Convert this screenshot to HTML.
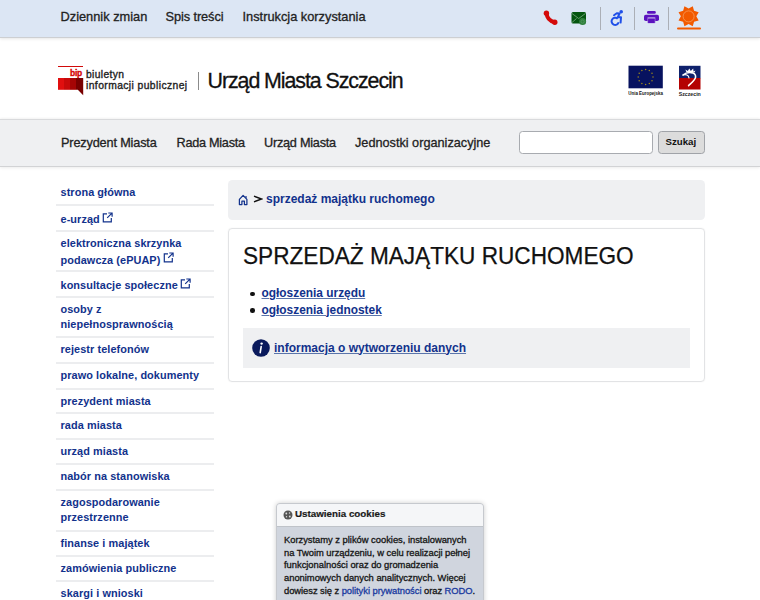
<!DOCTYPE html>
<html lang="pl"><head><meta charset="utf-8">
<style>
*{box-sizing:border-box;margin:0;padding:0}
html,body{width:760px;height:600px;overflow:hidden;background:#fff}
body{font-family:"Liberation Sans",sans-serif;position:relative;color:#222}
.a{position:absolute;white-space:nowrap;line-height:1}
#top{position:absolute;left:0;top:0;width:760px;height:38px;background:#dce6f4;border-bottom:1px solid #cdcfd2;box-shadow:0 1px 3px rgba(0,0,0,.10)}
.tl{font-size:12.8px;color:#222;top:11px;margin-left:.5px;-webkit-text-stroke:.3px #222}
.sep{position:absolute;width:1px;background:#abafb6;top:7px;height:22.5px}
#nav{position:absolute;left:0;top:119px;width:760px;height:48px;background:#eff0f2;border-top:1px solid #d9dadc;border-bottom:1px solid #d2d3d5;box-shadow:0 1px 3px rgba(0,0,0,.08),0 -1px 2px rgba(0,0,0,.04)}
.nl{font-size:12.7px;color:#222;top:136.5px;-webkit-text-stroke:.3px #222}
.side{position:absolute;left:56px;width:158px;height:2px;background:#ecedef}
.sl{font-size:10.9px;color:#12328c;font-weight:bold;letter-spacing:.08px}
#crumb{position:absolute;left:228px;top:180px;width:476.5px;height:40px;background:#eff0f2;border-radius:4.5px}
#box{position:absolute;left:227.8px;top:228px;width:477.2px;height:154px;border:1.6px solid #e2e3e5;border-radius:4px;box-shadow:0 0 1.5px rgba(0,0,0,.08)}
#info{position:absolute;left:243px;top:328px;width:446.6px;height:40px;background:#eff0f2}
.lnk{color:#12328c;font-weight:bold;text-decoration:underline;text-decoration-color:#5a74ab;text-decoration-thickness:1px;text-underline-offset:.5px}
#cookie{position:absolute;left:276px;top:502.5px;width:207.5px;height:110px;border-radius:4px;background:#d0d5de;box-shadow:0 0 5px rgba(0,0,0,.2);overflow:hidden;border:1px solid #c6c9ce}
#ch{position:absolute;left:0;top:0;width:100%;height:23px;background:#f5f6f8;border-bottom:1px solid #bfc3c9}
.ct{font-size:9.4px;color:#151515;-webkit-text-stroke:.3px #151515}
</style></head><body>
<div id="top"></div>
<div class="a tl" style="left:60px">Dziennik zmian</div>
<div class="a tl" style="left:165px;letter-spacing:-.1px">Spis treści</div>
<div class="a tl" style="left:242px">Instrukcja korzystania</div>
<svg class="a" style="left:542px;top:10px" width="17" height="16" viewBox="0 0 17 16">
<path d="M4.6 3.4Q5 10 12.6 12.4" stroke="#d40a0a" stroke-width="4" fill="none" stroke-linecap="round"/>
<circle cx="4.4" cy="3.3" r="2.7" fill="#d40a0a"/><circle cx="12.8" cy="12.3" r="2.7" fill="#d40a0a"/></svg>
<svg class="a" style="left:571px;top:11px" width="17" height="15" viewBox="0 0 17 15">
<rect x="0.5" y="1" width="14.5" height="11.5" rx="1.5" fill="#05560f"/>
<path d="M1 2.5l6.7 5 6.7-5M1 11.5l4.5-4M14.5 11.5l-4.5-4" stroke="#8fb895" stroke-width=".7" fill="none"/>
<circle cx="11.6" cy="10.6" r="3.5" fill="#2f7f3c"/><circle cx="11.6" cy="10.6" r="1.6" fill="none" stroke="#5aa066" stroke-width=".6"/></svg>
<div class="sep" style="left:600px"></div>
<svg class="a" style="left:609px;top:9px" width="16" height="17" viewBox="0 0 16 17">
<circle cx="12.2" cy="2.8" r="1.8" fill="#1f4fe8"/>
<path d="M5 6.2L7.8 4.2 10.6 4.6 8.8 8.2 12 8.3 11.6 13.6" stroke="#1f4fe8" stroke-width="2" fill="none" stroke-linejoin="round" stroke-linecap="round"/>
<path d="M8.75 9.75A3.6 3.6 0 1 0 9.68 13.23" stroke="#1f4fe8" stroke-width="2" fill="none"/></svg>
<div class="sep" style="left:634px"></div>
<svg class="a" style="left:643px;top:10px" width="17" height="14" viewBox="0 0 17 14">
<rect x="4" y="0.9" width="8.8" height="2.9" rx="1.3" fill="#5b12bf"/>
<rect x="1" y="4.7" width="15" height="6.4" rx="1.8" fill="#5b12bf"/>
<rect x="4.4" y="7" width="8" height="6.2" rx=".8" fill="#a27fdc"/>
<rect x="5.1" y="8.7" width="6.6" height="4.4" rx=".5" fill="#5b12bf"/></svg>
<div class="sep" style="left:668px"></div>
<svg class="a" style="left:676px;top:4px" width="26" height="27" viewBox="0 0 26 27">
<polygon fill="#f25a00" points="16.77,2.23 18.04,6.86 22.67,8.13 20.30,12.30 22.67,16.47 18.04,17.74 16.77,22.37 12.60,20.00 8.43,22.37 7.16,17.74 2.53,16.47 4.90,12.30 2.53,8.13 7.16,6.86 8.43,2.23 12.60,4.60"/>
<circle cx="12.6" cy="12.4" r="5.5" fill="#f25a00" stroke="#f7b27a" stroke-width=".6"/>
<rect x="1" y="23.6" width="24" height="2" rx="1" fill="#f25a00"/></svg>
<div class="a" style="left:58px;top:65.5px;width:25px;height:1.8px;background:#d10a0a"></div>
<div class="a" style="left:70px;top:68.5px;font-size:8.5px;font-weight:bold;color:#d40000;letter-spacing:-.3px;-webkit-text-stroke:.3px #d40000">bip</div>
<svg class="a" style="left:58px;top:78px" width="26" height="18" viewBox="0 0 26 18">
<path d="M0 0h6v11.8H0z" fill="#e10f0f"/><path d="M6 0h6v11.8H6z" fill="#c80a0a"/><path d="M12 0h6v11.8h-6z" fill="#a50505"/><path d="M18 0h7.2v17.2l-5.4-5.4H18z" fill="#780000"/></svg>
<div class="a" style="left:86px;top:69.5px;font-size:10.3px;color:#222;letter-spacing:.35px;-webkit-text-stroke:.35px #222">biuletyn</div>
<div class="a" style="left:86px;top:81px;font-size:10.3px;color:#222;letter-spacing:.42px;-webkit-text-stroke:.35px #222">informacji publicznej</div>
<div class="a" style="left:198px;top:72px;width:1.4px;height:18px;background:#8b8b8b"></div>
<div class="a" style="left:207.5px;top:70.7px;font-size:21.4px;color:#111;letter-spacing:-1.07px;-webkit-text-stroke:.3px #111">Urząd Miasta Szczecin</div>
<svg class="a" style="left:628px;top:65px" width="36" height="31" viewBox="0 0 36 31">
<rect x="0.5" y="0.7" width="34.3" height="22.6" fill="#07125f"/>
<g fill="#a08a1a"><circle cx="25.00" cy="12.00" r=".75"/><circle cx="24.01" cy="15.70" r=".75"/><circle cx="21.30" cy="18.41" r=".75"/><circle cx="17.60" cy="19.40" r=".75"/><circle cx="13.90" cy="18.41" r=".75"/><circle cx="11.19" cy="15.70" r=".75"/><circle cx="10.20" cy="12.00" r=".75"/><circle cx="11.19" cy="8.30" r=".75"/><circle cx="13.90" cy="5.59" r=".75"/><circle cx="17.60" cy="4.60" r=".75"/><circle cx="21.30" cy="5.59" r=".75"/><circle cx="24.01" cy="8.30" r=".75"/></g>
<text x="17.6" y="29.6" font-family="Liberation Sans" font-size="5.6" font-weight="bold" text-anchor="middle" fill="#111" textLength="34.5" lengthAdjust="spacingAndGlyphs">Unia Europejska</text></svg>
<svg class="a" style="left:678px;top:65px" width="24" height="32" viewBox="0 0 24 32">
<rect x="1" y="0.8" width="21.5" height="12.5" fill="#0f216c"/>
<rect x="1" y="13" width="21.5" height="11.5" fill="#b40202"/>
<path d="M8.4 7.2L7.4 4.6 9.8 6 11.3 3.6 12.8 6 15.2 3.6 15.5 6.4 17.4 5.4 16.6 7.4z" fill="#fff"/>
<path d="M5 10C7 8.2 10 7.4 13 7.6 16 7.8 17.8 9.2 17.6 12 17.4 15 14 17.5 10.6 20.6" stroke="#fff" stroke-width="1.6" fill="none" stroke-linecap="round"/>
<path d="M5.2 10C7 9.4 9 9.6 10.4 11.2L11 13" stroke="#fff" stroke-width="1.1" fill="none" stroke-linecap="round"/>
<text x="11.8" y="30.6" font-family="Liberation Sans" font-size="5.8" font-weight="bold" text-anchor="middle" fill="#222" textLength="22" lengthAdjust="spacingAndGlyphs">Szczecin</text></svg>
<div id="nav"></div>
<div class="a nl" style="left:61px;letter-spacing:-0.15px">Prezydent Miasta</div>
<div class="a nl" style="left:176.5px;letter-spacing:-0.27px">Rada Miasta</div>
<div class="a nl" style="left:264px;letter-spacing:-0.24px">Urząd Miasta</div>
<div class="a nl" style="left:355px;letter-spacing:0px">Jednostki organizacyjne</div>
<div class="a" style="left:519px;top:131px;width:134px;height:23px;background:#fff;border:1px solid #a8abb0;border-radius:3.5px"></div>
<div class="a" style="left:658px;top:131px;width:46.5px;height:23px;background:#dcdcdc;border:1px solid #a0a3a8;border-radius:3.5px"></div>
<div class="a" style="left:665.5px;top:137px;font-size:9.7px;font-weight:bold;color:#111">Szukaj</div>
<div class="a sl" style="left:60.5px;top:186.8px">strona główna</div>
<div class="side" style="top:204px"></div>
<div class="a sl" style="left:60.5px;top:212.1px">e-urząd<svg style="display:inline-block;vertical-align:baseline;margin-left:2.5px;position:relative;top:-.5px" width="11" height="11" viewBox="0 0 11 11"><path d="M5 1.8H1.3v8h8V6M6.3 1h3.8v3.8M10 1.1L5.2 5.9" stroke="#12328c" stroke-width="1.2" fill="none"/></svg></div>
<div class="side" style="top:230px"></div>
<div class="a sl" style="left:60.5px;top:237.6px">elektroniczna skrzynka</div>
<div class="a sl" style="left:60.5px;top:252.8px">podawcza (ePUAP)<svg style="display:inline-block;vertical-align:baseline;margin-left:2.5px;position:relative;top:-.5px" width="11" height="11" viewBox="0 0 11 11"><path d="M5 1.8H1.3v8h8V6M6.3 1h3.8v3.8M10 1.1L5.2 5.9" stroke="#12328c" stroke-width="1.2" fill="none"/></svg></div>
<div class="side" style="top:270px"></div>
<div class="a sl" style="left:60.5px;top:278.4px">konsultacje społeczne<svg style="display:inline-block;vertical-align:baseline;margin-left:2.5px;position:relative;top:-.5px" width="11" height="11" viewBox="0 0 11 11"><path d="M5 1.8H1.3v8h8V6M6.3 1h3.8v3.8M10 1.1L5.2 5.9" stroke="#12328c" stroke-width="1.2" fill="none"/></svg></div>
<div class="side" style="top:296px"></div>
<div class="a sl" style="left:60.5px;top:304.2px">osoby z</div>
<div class="a sl" style="left:60.5px;top:319.4px">niepełnosprawnością</div>
<div class="side" style="top:336px"></div>
<div class="a sl" style="left:60.5px;top:344.4px">rejestr telefonów</div>
<div class="side" style="top:362px"></div>
<div class="a sl" style="left:60.5px;top:370.1px">prawo lokalne, dokumenty</div>
<div class="side" style="top:388px"></div>
<div class="a sl" style="left:60.5px;top:395.5px">prezydent miasta</div>
<div class="side" style="top:412px"></div>
<div class="a sl" style="left:60.5px;top:420.4px">rada miasta</div>
<div class="side" style="top:438px"></div>
<div class="a sl" style="left:60.5px;top:446.1px">urząd miasta</div>
<div class="side" style="top:463px"></div>
<div class="a sl" style="left:60.5px;top:471.2px">nabór na stanowiska</div>
<div class="side" style="top:489px"></div>
<div class="a sl" style="left:60.5px;top:496.5px">zagospodarowanie</div>
<div class="a sl" style="left:60.5px;top:511.7px">przestrzenne</div>
<div class="side" style="top:530px"></div>
<div class="a sl" style="left:60.5px;top:537.6px">finanse i majątek</div>
<div class="side" style="top:555px"></div>
<div class="a sl" style="left:60.5px;top:562.6px">zamówienia publiczne</div>
<div class="side" style="top:580px"></div>
<div class="a sl" style="left:60.5px;top:588.1px">skargi i wnioski</div>
<div id="crumb"></div>
<svg class="a" style="left:237.7px;top:193.5px" width="11" height="12" viewBox="0 0 11 12">
<path d="M1.4 10.6V5.4L5.1 1.4 8.9 5.4V10.6H6.4V7.2H3.9V10.6z" stroke="#12328c" stroke-width="1.25" fill="none" stroke-linejoin="round"/>
<path d="M7.4 3.4V1.9H8.6V4.6z" fill="#12328c"/></svg>
<svg class="a" style="left:253px;top:195px" width="10" height="8" viewBox="0 0 10 8"><path d="M1 1.1L8.6 4 1 6.9" stroke="#111" stroke-width="1.5" fill="none"/></svg>
<div class="a" style="left:266px;top:192.5px;font-size:12px;color:#12328c;font-weight:bold">sprzedaż majątku ruchomego</div>
<div id="box"></div>
<div class="a" style="left:243px;top:244px;font-size:24.4px;color:#111;-webkit-text-stroke:.25px #111;transform:scaleX(.927);transform-origin:0 0">SPRZEDAŻ MAJĄTKU RUCHOMEGO</div>
<div class="a" style="left:250px;top:291.5px;width:4.5px;height:4.5px;border-radius:50%;background:#111"></div>
<div class="a" style="left:250px;top:308px;width:4.5px;height:4.5px;border-radius:50%;background:#111"></div>
<div class="a lnk" style="left:261.5px;top:288px;font-size:11.9px">ogłoszenia urzędu</div>
<div class="a lnk" style="left:261.5px;top:304.5px;font-size:11.9px">ogłoszenia jednostek</div>
<div id="info"></div>
<svg class="a" style="left:251.5px;top:338.5px" width="18" height="18" viewBox="0 0 18 18">
<circle cx="9" cy="9" r="8.8" fill="#0a1a5c"/><circle cx="9.6" cy="4.6" r="1.2" fill="#fff"/>
<path d="M9.2 7.5L8.2 13.6" stroke="#fff" stroke-width="1.6" stroke-linecap="round"/></svg>
<div class="a lnk" style="left:274px;top:341.5px;font-size:12px">informacja o wytworzeniu danych</div>
<div id="cookie"><div id="ch"></div></div>
<svg class="a" style="left:283px;top:510px" width="10" height="10" viewBox="0 0 10 10">
<circle cx="5" cy="5" r="4.5" fill="#555"/><circle cx="3.3" cy="3.5" r=".9" fill="#ddd"/><circle cx="6.5" cy="3" r=".7" fill="#ddd"/><circle cx="6.8" cy="6.5" r=".9" fill="#ddd"/><circle cx="3.5" cy="6.8" r=".7" fill="#ddd"/></svg>
<div class="a" style="left:295px;top:508.6px;font-size:9.8px;font-weight:bold;color:#1a1a1a;-webkit-text-stroke:.2px #1a1a1a">Ustawienia cookies</div>
<div class="a ct" style="left:284px;top:535px;letter-spacing:-.02px">Korzystamy z plików cookies, instalowanych</div>
<div class="a ct" style="left:284px;top:547.8px;letter-spacing:-.02px">na Twoim urządzeniu, w celu realizacji pełnej</div>
<div class="a ct" style="left:284px;top:560.3px;letter-spacing:-.02px">funkcjonalności oraz do gromadzenia</div>
<div class="a ct" style="left:284px;top:573px;letter-spacing:-.02px">anonimowych danych analitycznych. Więcej</div>
<div class="a ct" style="left:284px;top:585.5px;letter-spacing:-.05px">dowiesz się z <span style="color:#1a3a9e;-webkit-text-stroke-color:#1a3a9e">polityki prywatności</span> oraz <span style="color:#1a3a9e;-webkit-text-stroke-color:#1a3a9e">RODO</span>.</div>
</body></html>
